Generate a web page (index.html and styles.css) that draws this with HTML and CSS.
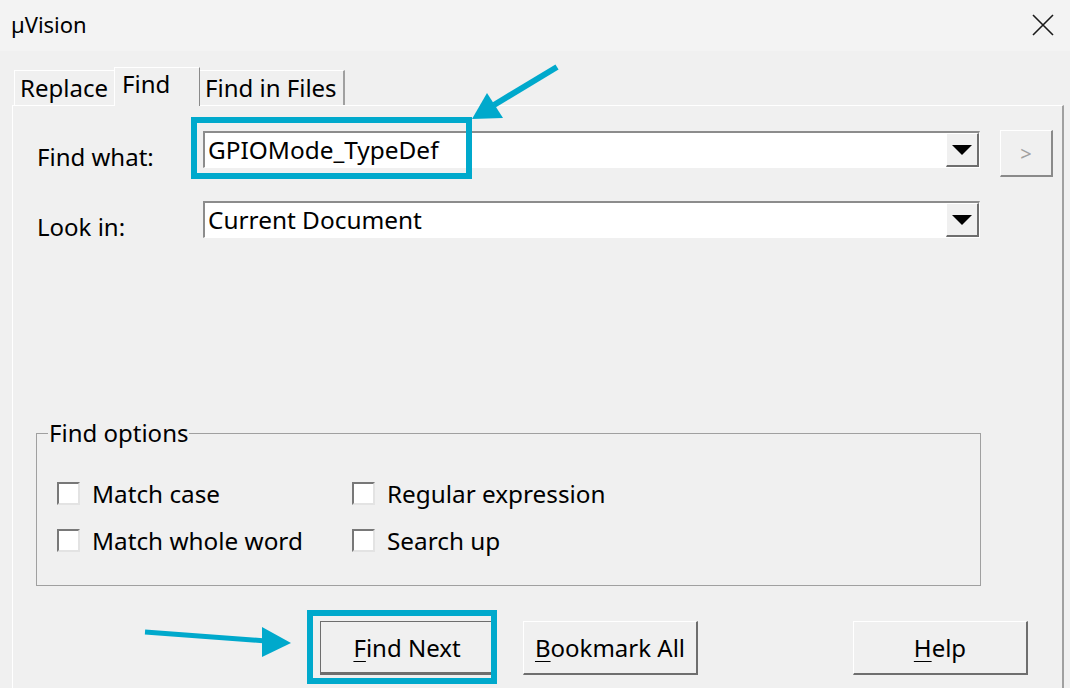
FILE: index.html
```html
<!DOCTYPE html>
<html lang="en">
<head>
<meta charset="utf-8">
<title>µVision</title>
<link rel="stylesheet" href="styles.css">
</head>
<body>
<div class="titlebar">
  <span class="title">µVision</span>
  <svg class="close" width="24" height="22" viewBox="0 0 24 22"><path d="M2 1 L22 21 M22 1 L2 21" stroke="#1a1a1a" stroke-width="1.6" fill="none"/></svg>
</div>
<div class="tabs">
  <div class="tab tab-replace">Replace</div>
  <div class="tab tab-find active">Find</div>
  <div class="tab tab-files">Find in Files</div>
</div>
<div class="panel">
  <div class="field-row">
    <label class="field-label">Find what:</label>
    <div class="combo">
      <span class="combo-text">GPIOMode_TypeDef</span>
      <span class="combo-btn"><span class="tri"></span></span>
    </div>
    <button class="more-btn">&gt;</button>
  </div>
  <div class="field-row row2">
    <label class="field-label">Look in:</label>
    <div class="combo">
      <span class="combo-text">Current Document</span>
      <span class="combo-btn"><span class="tri"></span></span>
    </div>
  </div>
  <fieldset class="group">
    <legend class="group-title">Find options</legend>
    <div class="options">
      <div class="check"><span class="box"></span><span class="check-label">Match case</span></div>
      <div class="check"><span class="box"></span><span class="check-label">Regular expression</span></div>
      <div class="check"><span class="box"></span><span class="check-label">Match whole word</span></div>
      <div class="check"><span class="box"></span><span class="check-label">Search up</span></div>
    </div>
  </fieldset>
  <div class="buttons">
    <button class="btn btn-default"><u>F</u>ind Next</button>
    <button class="btn btn-bookmark"><u>B</u>ookmark All</button>
    <button class="btn btn-help"><u>H</u>elp</button>
  </div>
</div>

<div class="highlight hl-input"></div>
<div class="highlight hl-button"></div>
<svg class="arrows" width="1070" height="688" viewBox="0 0 1070 688">
  <line x1="557" y1="67" x2="494" y2="105" stroke="#00a9cc" stroke-width="6"/>
  <polygon points="472,119 487,93 503,118" fill="#00a9cc"/>
  <line x1="145" y1="632" x2="266" y2="641" stroke="#00a9cc" stroke-width="5"/>
  <polygon points="291,643 262,627 262,657" fill="#00a9cc"/>
</svg>
</body>
</html>
```

FILE: styles.css
```css
* { box-sizing: border-box; }

body {
  margin: 0;
  width: 1070px;
  height: 688px;
  overflow: hidden;
  position: relative;
  background: #f0f0f0;
  font-family: "Noto Sans", "Open Sans", sans-serif;
  color: #000;
}

.titlebar {
  height: 51px;
  background: #f3f3f3;
  display: flex;
  align-items: center;
  justify-content: space-between;
  padding: 0 15px 4px 11px;
}

.title {
  font-size: 22px;
}

.close { display: block; margin-top: 2px; }

.tabs {
  height: 54px;
  display: flex;
  align-items: flex-end;
  padding-left: 14px;
}

.tab {
  height: 35px;
  border-top: 1px solid #fff;
  border-left: 1px solid #fff;
  border-right: 1px solid #a0a0a0;
  font-size: 24px;
  line-height: 34px;
  padding: 0 5px;
  white-space: nowrap;
}

.tab-replace { width: 100px; border-right: none; }
.tab-find { width: 86px; }
.tab-files { width: 145px; border-left: none; border-right: 2px solid #a0a0a0; }

.tab.active {
  height: 39px;
  margin-bottom: -1px;
  position: relative;
  z-index: 1;
  background: #f0f0f0;
  padding: 0 7px;
  line-height: 32px;
  border-right: 1px solid #8a8a8a;
}

.panel {
  margin: 0 6px 0 12px;
  height: 600px;
  border-top: 1px solid #fff;
  border-left: 1px solid #fff;
  border-right: 2px solid #a0a0a0;
}

.field-row {
  display: flex;
  align-items: flex-start;
  padding-left: 24px;
  margin-top: 24px;
}

.row2 { margin-top: 24px; }

.field-label {
  width: 166px;
  font-size: 24px;
  line-height: 32px;
  padding-top: 11px;
}

.row2 .field-label { padding-top: 10px; }

.combo {
  width: 777px;
  height: 37px;
  margin-top: 1px;
  background: #fff;
  border-top: 2px solid #8c8c8c;
  border-left: 2px solid #8c8c8c;
  border-bottom: 1px solid #fff;
  border-right: 1px solid #fff;
  display: flex;
  align-items: center;
  justify-content: space-between;
}

.row2 .combo { margin-top: 0; height: 37px; }

.combo-text {
  font-size: 24.4px;
  line-height: 32px;
  padding-left: 3px;
  white-space: nowrap;
}

.combo-btn {
  width: 33px;
  height: 100%;
  background: #f0f0f0;
  border-top: 1px solid #fff;
  border-left: 1px solid #fff;
  border-right: 2px solid #6e6e6e;
  border-bottom: 2px solid #6e6e6e;
  display: flex;
  align-items: center;
  justify-content: center;
}

.tri {
  width: 0;
  height: 0;
  border-left: 10px solid transparent;
  border-right: 10px solid transparent;
  border-top: 10px solid #000;
}

.more-btn {
  margin-left: 20px;
  width: 53px;
  height: 47px;
  background: #f0f0f0;
  border: none;
  border-top: 1px solid #fff;
  border-left: 1px solid #fff;
  border-right: 2px solid #8a8a8a;
  border-bottom: 2px solid #8a8a8a;
  font-family: "Noto Sans", sans-serif;
  font-size: 20px;
  color: #a0a0a0;
  padding: 0;
}

.group {
  margin: 174px 0 0 23px;
  width: 945px;
  padding: 0 0 33px 20px;
  border: 1px solid #a0a0a0;
}

.group-title {
  margin-left: -9px;
  padding: 0 1px;
  font-size: 24px;
  line-height: 32px;
}

.options {
  display: grid;
  grid-template-columns: 295px auto;
  row-gap: 24px;
  padding-top: 33px;
}

.check {
  display: flex;
  align-items: center;
  height: 23px;
}

.box {
  width: 23px;
  height: 23px;
  background: #fff;
  border-top: 2px solid #787878;
  border-left: 2px solid #787878;
  border-right: 2px solid #e3e3e3;
  border-bottom: 2px solid #e3e3e3;
}

.check-label {
  margin-left: 12px;
  font-size: 24.3px;
  line-height: 32px;
  white-space: nowrap;
}

.buttons {
  display: flex;
  margin-top: 35px;
  padding-left: 307px;
}

.btn {
  width: 175px;
  height: 54px;
  background: #f0f0f0;
  border: none;
  border-top: 1px solid #fff;
  border-left: 1px solid #fff;
  border-right: 2px solid #6e6e6e;
  border-bottom: 2px solid #6e6e6e;
  font-family: "Noto Sans", sans-serif;
  font-size: 24px;
  color: #000;
  padding: 0;
}

.btn u { text-underline-offset: 4px; text-decoration-thickness: 1px; }

.btn-default {
  border: 1px solid #6e6e6e;
  border-bottom: 3px solid #6e6e6e;
  border-right: 2px solid #6e6e6e;
}

.btn-bookmark { margin-left: 28px; }
.btn-help { margin-left: 155px; }

.highlight {
  position: absolute;
  border: 6px solid #00a9cc;
  pointer-events: none;
}

.hl-input { left: 191px; top: 117px; width: 281px; height: 62px; }
.hl-button { left: 307px; top: 610px; width: 190px; height: 74px; }

.arrows {
  position: absolute;
  left: 0;
  top: 0;
  pointer-events: none;
}
```
